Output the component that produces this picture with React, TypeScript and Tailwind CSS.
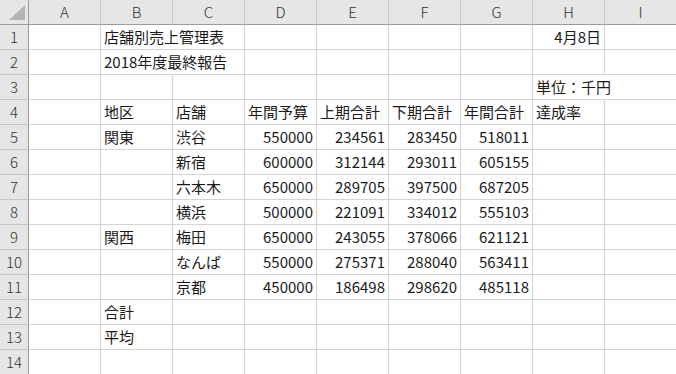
import React from "react";

type Cell = { t: string; r?: boolean; over?: boolean };

const cols = ["A", "B", "C", "D", "E", "F", "G", "H", "I"];

const rows: Record<number, Record<string, Cell>> = {
  1: { B: { t: "店舗別売上管理表", over: true }, H: { t: "4月8日", r: true } },
  2: { B: { t: "2018年度最終報告", over: true } },
  3: { H: { t: "単位：千円", over: true } },
  4: {
    B: { t: "地区" },
    C: { t: "店舗" },
    D: { t: "年間予算" },
    E: { t: "上期合計" },
    F: { t: "下期合計" },
    G: { t: "年間合計" },
    H: { t: "達成率" },
  },
  12: { B: { t: "合計" } },
  13: { B: { t: "平均" } },
};

const data: [string, string, number, number, number, number][] = [
  ["関東", "渋谷", 550000, 234561, 283450, 518011],
  ["", "新宿", 600000, 312144, 293011, 605155],
  ["", "六本木", 650000, 289705, 397500, 687205],
  ["", "横浜", 500000, 221091, 334012, 555103],
  ["関西", "梅田", 650000, 243055, 378066, 621121],
  ["", "なんば", 550000, 275371, 288040, 563411],
  ["", "京都", 450000, 186498, 298620, 485118],
];

data.forEach((d, i) => {
  const row: Record<string, Cell> = {};
  if (d[0]) row.B = { t: d[0] };
  row.C = { t: d[1] };
  row.D = { t: String(d[2]), r: true };
  row.E = { t: String(d[3]), r: true };
  row.F = { t: String(d[4]), r: true };
  row.G = { t: String(d[5]), r: true };
  rows[5 + i] = row;
});

const font = {
  fontFamily: '"Noto Sans CJK JP", "Noto Sans", sans-serif',
};

export default function App() {
  return (
    <div
      className="w-[676px] h-[374px] overflow-hidden bg-white text-[15px] text-[#1a1a1a]"
      style={font}
    >
      <div className="grid grid-cols-[29px_repeat(9,72px)] grid-rows-[25px_repeat(14,25px)]">
        <div className="relative bg-[#e6e6e6] border-r border-b border-r-[#9b9b9b] border-b-[#9b9b9b]">
          <svg className="absolute left-0 top-0" width="28" height="24">
            <polygon points="25,5 25,20 9,20" fill="#b4b4b4" />
          </svg>
        </div>
        {cols.map((c) => (
          <div
            key={c}
            className="bg-[#e6e6e6] border-r border-r-[#c6c6c6] border-b border-b-[#9b9b9b] flex items-center justify-center text-[#333] font-light leading-none pb-[1px]"
          >
            {c}
          </div>
        ))}
        {Array.from({ length: 14 }, (_, i) => i + 1).map((rn) => (
          <React.Fragment key={rn}>
            <div className="bg-[#e6e6e6] border-r border-r-[#9b9b9b] border-b border-b-[#c6c6c6] flex items-center justify-center text-[#333] font-light leading-none pb-[1px]">
              {rn}
            </div>
            {cols.map((c) => {
              const cell = rows[rn]?.[c];
              const over = cell?.over;
              return (
                <div
                  key={c}
                  className={`relative border-b border-b-[#d4d4d4] flex items-center whitespace-nowrap leading-none pb-[1px] ${
                    over ? "border-r border-r-transparent overflow-visible z-10" : "border-r border-r-[#d4d4d4] overflow-hidden"
                  } ${cell?.r ? "justify-end pr-[3px]" : "justify-start pl-[3px]"}`}
                >
                  {cell ? cell.t : null}
                </div>
              );
            })}
          </React.Fragment>
        ))}
      </div>
    </div>
  );
}
